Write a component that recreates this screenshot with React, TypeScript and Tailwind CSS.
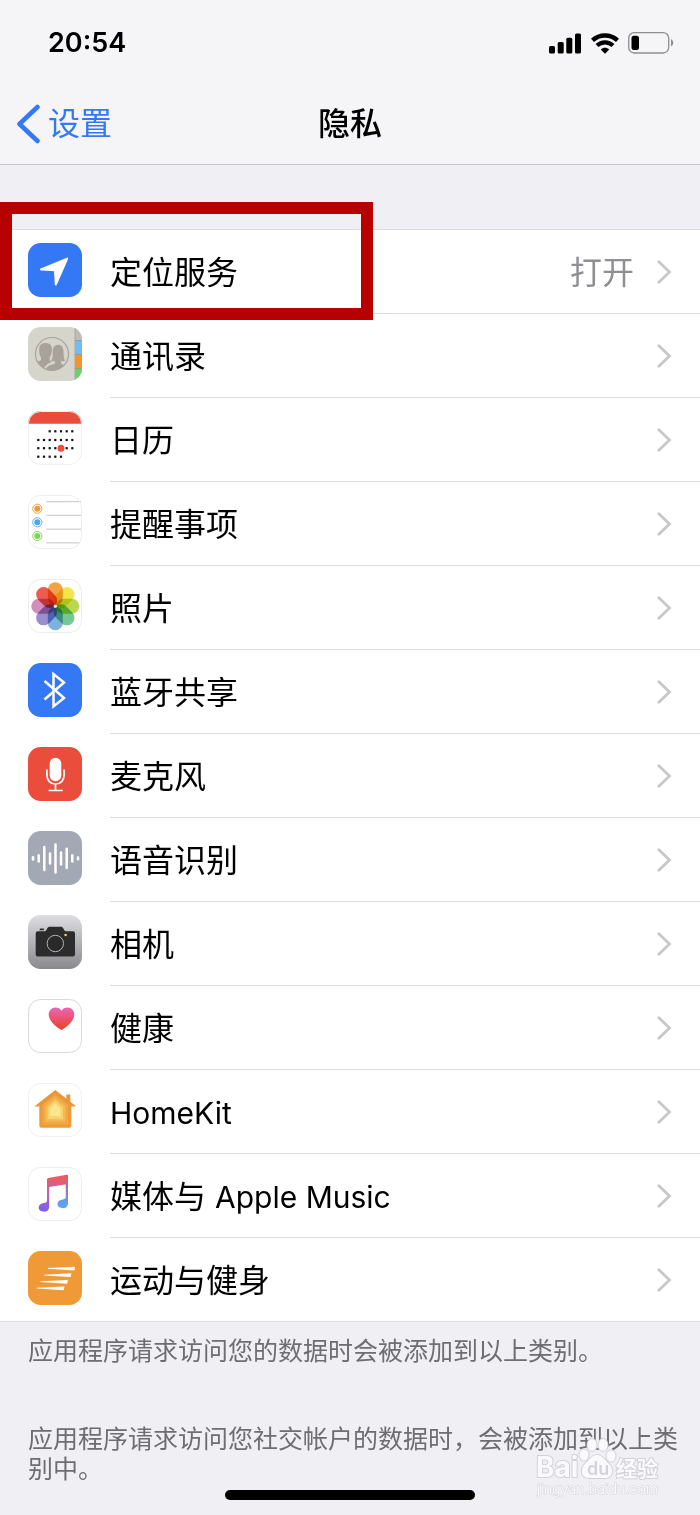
import type { ReactNode } from "react";

function Tile({ children, fill = "#fff", outline }: { children: ReactNode; fill?: string; outline?: string }) {
  return (
    <svg viewBox="0 0 54 54" className="mb-1 size-[54px] shrink-0" aria-hidden="true">
      <rect width="54" height="54" rx="12.5" fill={fill} />
      {children}
      {outline && <rect x="0.5" y="0.5" width="53" height="53" rx="12" fill="none" stroke={outline} />}
    </svg>
  );
}

const LocationIcon = () => (
  <Tile fill="#3478f6">
    <path d="M39.2 15.6 13 26.4 27 27.3 27.8 41.6Z" fill="#fff" stroke="#fff" strokeWidth="2" strokeLinejoin="round" />
  </Tile>
);

const ContactsIcon = () => (
  <Tile fill="#d5d5cb">
    <clipPath id="contacts-tile"><rect width="54" height="54" rx="12.5" /></clipPath>
    <clipPath id="contacts-disc"><circle cx="24" cy="27" r="16.5" /></clipPath>
    <g clipPath="url(#contacts-tile)">
      <rect x="47" y="0" width="7" height="13.5" fill="#bdbdb5" />
      <rect x="47" y="13.5" width="7" height="14" fill="#6fbdf3" />
      <rect x="47" y="27.5" width="7" height="14" fill="#f0952f" />
      <rect x="47" y="41.5" width="7" height="13" fill="#68d267" />
      <path d="M47 0V54" stroke="#a9a9a1" strokeWidth="1" />
      <path d="M47 13.5h7M47 27.5h7M47 41.5h7" stroke="#8d8f86" strokeWidth="0.7" />
    </g>
    <g clipPath="url(#contacts-disc)" fill="#a9a29b">
      <path d="M6 46V38c2-3 5-3.500 7-5v-2.500c-1.500-2-2-5-1.900-8 .2-4 2.300-6.500 6.500-6.500s6.400 2.500 6.400 6.500c0 3-.8 6-2.300 8V33c1 1 2 1 2.800 1.500-3 1.500-7.500 3-8.500 8V46Z" />
      <path d="M17 46c0-7 4-8 9.500-9.500v-2c-1.500.3-3 0-3.800-.8 1.800-2 1.500-5 1.600-8.200.1-5 2-8 5.700-8 4.200 0 5.800 3 6 7.500.1 3.500-.2 6.500 1.500 8.500-1 1-2.700 1.200-4 1v2c2 1.500 5 1.500 7 3V46Z" stroke="#d5d5cb" strokeWidth="0.8" />
    </g>
    <circle cx="24" cy="27" r="16.500" fill="none" stroke="#a9a29b" strokeWidth="1.200" />
  </Tile>
);

const dayColumns = [10.3, 16, 21.7, 27.3, 33, 38.7, 44.3];
const weeks = [
  { y: 20.3, from: 2, to: 7 },
  { y: 29, from: 0, to: 7 },
  { y: 37.2, from: 0, to: 7 },
  { y: 45.7, from: 0, to: 5 },
];

const CalendarIcon = () => (
  <Tile outline="#f0f0f0">
    {weeks.map((w) =>
      dayColumns.slice(w.from, w.to).map((x) => <rect key={`${x}-${w.y}`} x={x - 1.1} y={w.y - 1.1} width="2.200" height="2.200" fill="#111" />),
    )}
    <circle cx="33" cy="37.2" r="3.500" fill="#eb4d3d" />
    <path d="M0 12.800C0 5.500 5.500 0 12.500 0h29C48.500 0 54 5.500 54 12.800Z" fill="#eb4d3d" />
  </Tile>
);

const reminders = [
  { y: 13.7, color: "#f19a37" },
  { y: 27.3, color: "#4ba5f3" },
  { y: 41, color: "#78d74b" },
];

const RemindersIcon = () => (
  <Tile outline="#ededed">
    <path d="M18.300 6.700H53M18.300 20.300H54M18.300 34.200H54M18.300 47.800H52" stroke="#cfcfcf" strokeWidth="1.300" />
    {reminders.map((r) => (
      <g key={r.y}>
        <circle cx="9.300" cy={r.y} r="4.600" fill="#fff" stroke={r.color} strokeWidth="0.9" />
        <circle cx="9.300" cy={r.y} r="3" fill={r.color} />
      </g>
    ))}
  </Tile>
);

const petals = ["#f2a345", "#f4e54a", "#b9d84f", "#75c795", "#7eb1e0", "#9a8fcb", "#d08fbd", "#ee5b50"];

const PhotosIcon = () => (
  <Tile outline="#ededed">
    <g className="isolate">
      {petals.map((color, i) => (
        <rect
          key={color}
          x="19.8"
          y="3.200"
          width="15"
          height="23.500"
          rx="7.500"
          fill={color}
          transform={`rotate(${i * 45} 27.3 27.2)`}
          className="mix-blend-multiply"
        />
      ))}
    </g>
    <circle cx="27.3" cy="27.2" r="1.500" fill="#fff" />
  </Tile>
);

const BluetoothIcon = () => (
  <Tile fill="#3478f6">
    <path d="M16.500 18 36 35 25.500 43.500V11L36 19.500 16.500 36.500" fill="none" stroke="#fff" strokeWidth="2.500" />
  </Tile>
);

const MicrophoneIcon = () => (
  <Tile fill="#eb4d3d">
    <rect x="21.700" y="10.700" width="11.600" height="23.600" rx="5.800" fill="#fff" />
    <path d="M18.900 22.500v5.500c0 5.500 3.600 9 8.600 9s8.600-3.500 8.600-9v-5.500M27.500 37v6.500M20.700 43.500h14" fill="none" stroke="#fff" strokeWidth="1.700" />
  </Tile>
);

const soundBars = [
  [5, 1.2],
  [10.7, 3.2],
  [16.3, 11.5],
  [22, 5],
  [27.500, 14],
  [33, 6],
  [38.7, 9.7],
  [44.3, 3.2],
  [50, 0.9],
];

const SpeechIcon = () => (
  <Tile fill="#a2a8b4">
    {soundBars.map(([x, h]) => (
      <path key={x} d={`M${x} ${27.4 - h}V${27.4 + h}`} stroke="#fff" strokeWidth="2.500" strokeLinecap="round" />
    ))}
  </Tile>
);

const CameraIcon = () => (
  <Tile fill="url(#camera-metal)">
    <linearGradient id="camera-metal" x1="0" y1="0" x2="0" y2="1">
      <stop offset="0" stopColor="#dedde2" />
      <stop offset="1" stopColor="#8a898e" />
    </linearGradient>
    <path d="M11.700 15.200v-.8q0-.8.8-.8h2.700q.8 0 .8.800v.8Z" fill="#2c2c2c" />
    <path d="M9.700 16.300h6c2.300 0 2.300-.8 3.300-2.600.8-1.500 1.500-2 3-2h10.500c1.500 0 2.300.5 3 2 1 1.800 1.200 2.600 3.300 2.600H45q2 0 2 2v21.300q0 2-2 2H9.700q-2 0-2-2V18.300q0-2 2-2Z" fill="#2c2c2c" />
    <circle cx="27.300" cy="28.500" r="8.200" fill="#292929" stroke="#b5b5b5" strokeWidth="1" />
    <circle cx="37.600" cy="20" r="1.300" fill="#f5cf48" />
  </Tile>
);

const HealthIcon = () => (
  <Tile outline="#d9d9d9">
    <linearGradient id="heart-tint" x1="0" y1="0" x2="0" y2="1">
      <stop offset="0" stopColor="#ea65b8" />
      <stop offset="1" stopColor="#eb4025" />
    </linearGradient>
    <path d="M33.500 31C29 28.500 20.700 22.500 20.700 15.500c0-4 3-7 6.700-7 2.700 0 4.800 1.200 6.100 3.200 1.300-2 3.400-3.200 6.100-3.200 3.700 0 6.700 3 6.700 7C46.300 22.500 38 28.500 33.500 31Z" fill="url(#heart-tint)" />
  </Tile>
);

const HomeKitIcon = () => (
  <Tile outline="#f0f0f0">
    <linearGradient id="home-tint" x1="0" y1="0" x2="0" y2="1">
      <stop offset="0" stopColor="#e8953c" />
      <stop offset="1" stopColor="#f19a37" />
    </linearGradient>
    <path d="M27.300 7 38.300 15.500V12.200q0-.6.6-.6h2.800q.6 0 .6.600v6.500l5.200 4q.6.700-.3.900H43.300V42.700q0 2-2 2h-28q-2 0-2-2V23.600H7.500q-1-.2-.3-.9Z" fill="url(#home-tint)" />
    <path d="M27.300 11.500 40.300 21.800V41.500h-26V21.800Z" fill="#f0a842" />
    <path d="M27.300 14.500 37.500 23V38.500h-20.400V23Z" fill="#f3b954" />
    <path d="M27.300 17 35 24.500v11.800H19.600V24.500Z" fill="#f7d36e" />
    <path d="M27.300 20.500 32.500 25.500v7.800H22V25.500Z" fill="#fae68e" />
  </Tile>
);

const MusicIcon = () => (
  <Tile outline="#ededed">
    <linearGradient id="music-tint" gradientUnits="userSpaceOnUse" x1="20" y1="10" x2="18" y2="43">
      <stop offset="0" stopColor="#ee5a60" />
      <stop offset="0.5" stopColor="#b867b2" />
      <stop offset="1" stopColor="#7f5cf6" />
    </linearGradient>
    <linearGradient id="music-blue" gradientUnits="userSpaceOnUse" x1="36" y1="12" x2="36" y2="38">
      <stop offset="0" stopColor="#cb5d8a" />
      <stop offset="1" stopColor="#59a4f7" />
    </linearGradient>
    <path d="M19 12.500q0-1.300 1.300-1.600L38.800 7.700q1.200-.2 1.200 1V17L21.200 20V39.500c0 3.500-2.300 5.200-5.300 5.200s-5.200-1.700-5.200-4.200c0-2.800 2.200-4 5-4.500 2.300-.4 3.300-.7 3.300-2.500Z" fill="url(#music-tint)" />
    <path d="M37.700 13.500 40 13V36c0 3.500-2.300 5.200-5.300 5.200s-5.200-1.700-5.200-4.200c0-2.800 2.200-4 5-4.500 2.200-.4 3.200-.7 3.200-2.500Z" fill="url(#music-blue)" />
  </Tile>
);

const FitnessIcon = () => (
  <Tile fill="#f09a37">
    <path d="M20 17 47 15.700 46.500 19.500 20 17.700ZM16 23.700 43.400 22.300 42.700 26.100 16 24.400ZM12.300 30.200 39.900 28.900 39.200 32.700 12.300 31ZM8.800 36.800 36.400 35.500 35.600 39.300 8.800 37.500Z" fill="#fff" />
  </Tile>
);

const rows: { id: string; label: ReactNode; icon: ReactNode; value?: string }[] = [
  { id: "location", label: "定位服务", icon: <LocationIcon />, value: "打开" },
  { id: "contacts", label: "通讯录", icon: <ContactsIcon /> },
  { id: "calendar", label: "日历", icon: <CalendarIcon /> },
  { id: "reminders", label: "提醒事项", icon: <RemindersIcon /> },
  { id: "photos", label: "照片", icon: <PhotosIcon /> },
  { id: "bluetooth", label: "蓝牙共享", icon: <BluetoothIcon /> },
  { id: "microphone", label: "麦克风", icon: <MicrophoneIcon /> },
  { id: "speech", label: "语音识别", icon: <SpeechIcon /> },
  { id: "camera", label: "相机", icon: <CameraIcon /> },
  { id: "health", label: "健康", icon: <HealthIcon /> },
  { id: "homekit", label: <span className="text-[30px]">HomeKit</span>, icon: <HomeKitIcon /> },
  { id: "music", label: <>媒体与 <span className="text-[30px]">Apple Music</span></>, icon: <MusicIcon /> },
  { id: "fitness", label: "运动与健身", icon: <FitnessIcon /> },
];

function StatusBar() {
  return (
    <div className="flex h-[86px] items-center justify-between pr-[26px] pl-12">
      <time className="pt-px text-[27px] font-semibold">20:54</time>
      <div className="flex items-center gap-[9px]">
        <svg viewBox="0 0 33 21" className="h-[21px] w-[33px]" aria-label="信号">
          <rect x="0" y="13" width="6" height="7.500" rx="1.500" />
          <rect x="8.700" y="9" width="6" height="11.500" rx="1.500" />
          <rect x="17.300" y="4.700" width="6" height="15.800" rx="1.500" />
          <rect x="26" y="0.500" width="6" height="20" rx="1.500" />
        </svg>
        <svg viewBox="0 0 28 21" className="h-[21px] w-7" aria-label="无线局域网">
          <path d="M1.500 7.400C8.500.8 19.500.8 26.500 7.400" fill="none" stroke="#000" strokeWidth="4.400" />
          <path d="M6 12.600c4.500-4.300 11.500-4.300 16 0" fill="none" stroke="#000" strokeWidth="4.200" />
          <path d="M9.800 16.600c2.400-2.400 6-2.400 8.400 0L14 20.800Z" />
        </svg>
        <svg viewBox="0 0 46 22" className="h-[22px] w-[46px]" aria-label="电池">
          <rect x="0.700" y="0.700" width="40" height="20.300" rx="5.500" fill="none" stroke="#8e8e93" strokeWidth="1.300" />
          <rect x="3.500" y="3.700" width="7.500" height="14.300" rx="2.500" />
          <path d="M43 7.300c3 1 3 6 0 7Z" fill="#8e8e93" />
        </svg>
      </div>
    </div>
  );
}

function Watermark() {
  return (
    <svg
      viewBox="0 0 136 64"
      className="pointer-events-none absolute right-7 bottom-[10px] h-16 w-[136px] font-['Inter','Noto_Sans_CJK_SC',sans-serif]"
      fill="#fafafc"
      stroke="#d2d2d8"
      strokeWidth="2"
      paintOrder="stroke"
    >
      <text x="0" y="39" fontSize="28" fontWeight="700">Bai</text>
      <ellipse cx="48" cy="17" rx="4.500" ry="5.500" />
      <ellipse cx="56" cy="7" rx="4.500" ry="6" />
      <ellipse cx="67" cy="7" rx="4.500" ry="6" />
      <ellipse cx="75" cy="18" rx="4.500" ry="5.500" />
      <path d="M61 17c5 0 8 5 12 9 6 6 3 14-4 14H53c-7 0-10-8-4-14 4-4 7-9 12-9Z" />
      <text x="51" y="37" fontSize="18" fontWeight="600" fill="#d3d3d9" stroke="none">du</text>
      <text x="80" y="38" fontSize="21" fontWeight="700">经验</text>
      <text x="1" y="56" fontSize="14" strokeWidth="1">jingyan.baidu.com</text>
    </svg>
  );
}

export default function App() {
  return (
    <div className="min-h-screen bg-[#efeff4] font-['Inter','Noto_Sans_CJK_SC',sans-serif] text-black">
      <header className="border-b border-[#c8c8cc] bg-[#f5f5f7]">
        <StatusBar />
        <nav className="grid h-[78px] grid-cols-[1fr_auto_1fr] items-center px-4 pb-[2px]">
          <a href="#settings" className="flex items-center gap-2 text-[32px] text-[#3478f6]">
            <svg viewBox="0 0 24 40" className="h-10 w-6" fill="none" stroke="currentColor" strokeWidth="4.500" strokeLinecap="round" strokeLinejoin="round" aria-hidden="true">
              <path d="M21.500 3 3.500 20l18 17" />
            </svg>
            设置
          </a>
          <h1 className="text-[32px] font-medium">隐私</h1>
        </nav>
      </header>

      <main className="pt-16">
        <div className="relative border-y border-[#dcdce0] bg-white">
          <ul>
            {rows.map((row) => (
              <li key={row.id} className="group">
                <a href={`#${row.id}`} className="flex items-stretch pl-7">
                  <span className="flex w-[82px] shrink-0 items-center">{row.icon}</span>
                  <span className="flex h-[84px] grow items-center border-b border-[#dcdce0] pr-7 text-[32px] group-last:h-[83px] group-last:border-b-0">
                    <span className="grow pt-[3px]">{row.label}</span>
                    {row.value && <span className="mr-[22px] pt-[3px] text-[#8e8e93]">{row.value}</span>}
                    <svg viewBox="0 0 16 26" className="h-[26px] w-4" fill="none" stroke="#c7c7cc" strokeWidth="2.800" aria-hidden="true">
                      <path d="M2 2 13.500 13 2 24" />
                    </svg>
                  </span>
                </a>
              </li>
            ))}
          </ul>
          <div className="pointer-events-none absolute -top-7 left-0 h-[118px] w-[373px] border-12 border-[#b90000]" />
        </div>
      </main>

      <footer className="relative pt-[14px] pb-3 pl-7 text-[25px] leading-[30px] text-[#6d6d72]">
        <p className="pr-5">应用程序请求访问您的数据时会被添加到以上类别。</p>
        <p className="mt-[58px] pr-5">应用程序请求访问您社交帐户的数据时，会被添加到以上类别中。</p>
        <div className="mt-[6px] mr-7 flex justify-center">
          <div className="h-[10px] w-[250px] rounded-full bg-black" />
        </div>
        <Watermark />
      </footer>
    </div>
  );
}
